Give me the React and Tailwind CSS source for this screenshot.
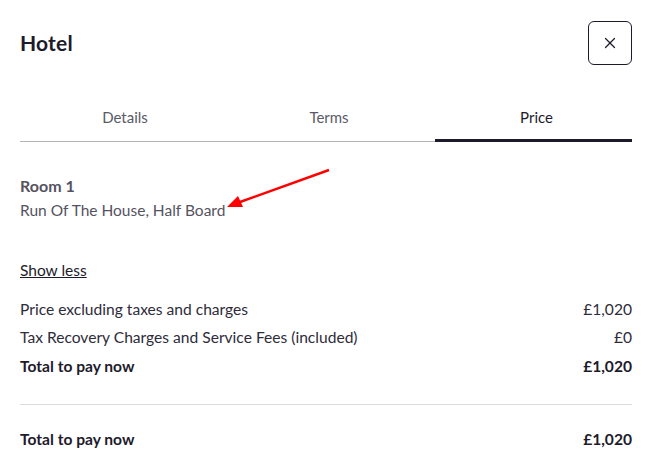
import { X } from "lucide-react";

const rows = [
  { label: "Price excluding taxes and charges", value: "£1,020" },
  { label: "Tax Recovery Charges and Service Fees (included)", value: "£0" },
];

export default function App() {
  return (
    <div
      className="relative w-[654px] h-[473px] bg-white text-[#1d1b2b] overflow-hidden"
      style={{ fontFamily: "Lato, 'Liberation Sans', sans-serif" }}
    >
      <div className="pl-5 pr-[22px] pt-[21px]">
        {/* header */}
        <div className="flex items-center justify-between">
          <h1 className="text-[21px] font-bold tracking-[0.2px]">Hotel</h1>
          <button className="w-11 h-11 flex items-center justify-center border border-[#1d1b2b] rounded-md">
            <X size={18} strokeWidth={1.6} />
          </button>
        </div>

        {/* tabs */}
        <div className="mt-[41px] grid grid-cols-3 border-b border-[#b5b5b5] text-[15px] text-[#5a5a66]">
          <div className="text-center pb-[12px] pl-[6px]">Details</div>
          <div className="text-center pb-[12px] pl-[6px]">Terms</div>
          <div className="text-center pb-[10px] pl-[6px] text-[#1d1b2b] border-b-[3px] border-[#1d1b2b] -mb-px ml-[7px]">Price</div>
        </div>

        {/* room */}
        <div className="mt-[32px] text-[#55535f]">
          <div className="text-[16px] font-bold">Room 1</div>
          <div className="text-[15.5px] mt-[1px]">Run Of The House, Half Board</div>
        </div>

        <button className="mt-[37px] text-[15.5px] underline text-[#1d1b2b]">Show less</button>

        {/* price rows */}
        <div className="mt-[16px] flex flex-col gap-[5px] text-[15.6px] text-[#2e2c3a]">
          {rows.map((r) => (
            <div key={r.label} className="flex justify-between">
              <span>{r.label}</span>
              <span>{r.value}</span>
            </div>
          ))}
          <div className="flex justify-between font-bold text-[#1d1b2b]">
            <span>Total to pay now</span>
            <span>£1,020</span>
          </div>
        </div>

        <div className="mt-[26px] border-t border-[#dcdcdc]" />

        <div className="mt-[23px] flex justify-between font-bold text-[15.6px]">
          <span>Total to pay now</span>
          <span>£1,020</span>
        </div>
      </div>

      {/* annotation arrow */}
      <svg className="absolute left-0 top-0 pointer-events-none" width="654" height="473">
        <line x1="329" y1="170" x2="240" y2="202" stroke="#f00" strokeWidth="2.5" />
        <polygon points="227,207 238,196 243,207" fill="#f00" />
      </svg>
    </div>
  );
}
